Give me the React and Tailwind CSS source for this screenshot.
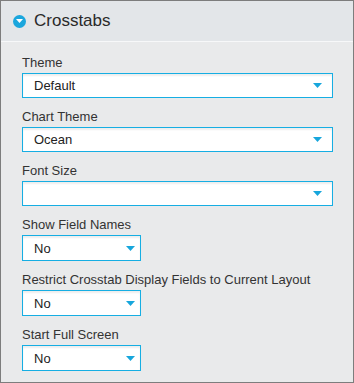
import React from "react";

const fields = [
  { label: "Theme", value: "Default", wide: true },
  { label: "Chart Theme", value: "Ocean", wide: true },
  { label: "Font Size", value: "", wide: true },
  { label: "Show Field Names", value: "No", wide: false },
  { label: "Restrict Crosstab Display Fields to Current Layout", value: "No", wide: false },
  { label: "Start Full Screen", value: "No", wide: false },
];

function Arrow() {
  return (
    <svg width="9" height="5" viewBox="0 0 9 5" className="shrink-0">
      <path d="M0 0 H9 L4.5 5 Z" fill="#17a6dc" />
    </svg>
  );
}

function SelectBox({ value, wide }) {
  return (
    <div
      className={`flex items-center justify-between bg-white border border-[#16aee3] shadow-[inset_0_2px_2px_rgba(0,0,0,0.07)] pl-[11px] ${
        wide ? "w-[311px] h-[25px] pr-[10px]" : "w-[119px] h-[26px] pr-[5px]"
      }`}
    >
      <span className="text-[13px] text-[#222] leading-none">{value}</span>
      <Arrow />
    </div>
  );
}

export default function App() {
  return (
    <div
      className="w-[354px] h-[383px] border border-[#7d7d7d] bg-[#e9eaeb] flex flex-col"
      style={{ fontFamily: '"Liberation Sans", Arial, sans-serif' }}
    >
      {/* HEADER */}
      <div className="h-[41px] bg-[#e3e6e9] border-b border-[#f7f8f9] flex items-center pl-[12px] gap-[8px] shrink-0">
        <div className="w-[13px] h-[13px] rounded-full bg-[#1ba6dd] flex items-center justify-center">
          <svg width="7" height="4" viewBox="0 0 7 4">
            <path d="M0 0 H7 L3.5 4 Z" fill="#fff" />
          </svg>
        </div>
        <span className="text-[17px] text-[#2a2a2a]">Crosstabs</span>
      </div>

      {/* BODY */}
      <div className="pl-[21px] pt-[13px]">
        {fields.map((f, i) => (
          <div key={i} className="mb-[11px]">
            <div className="text-[13px] leading-[16px] text-[#333] mb-[2px]">{f.label}</div>
            <SelectBox value={f.value} wide={f.wide} />
          </div>
        ))}
      </div>
    </div>
  );
}
